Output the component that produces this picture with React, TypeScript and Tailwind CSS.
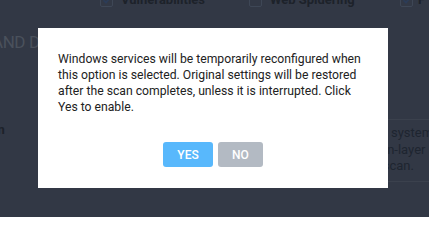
import React from "react";

function Check({ checked, className }: { checked: boolean; className?: string }) {
  return (
    <div className={"shrink-0 w-[13px] h-[13px] rounded-[2px] border border-[#3e4756] flex items-center justify-center " + (className ?? "")}>
      {checked && (
        <svg width="10" height="10" viewBox="0 0 10 10">
          <path d="M1.5 5.2 L4 7.6 L8.6 2" stroke="#2c3c57" strokeWidth="1.8" fill="none" />
        </svg>
      )}
    </div>
  );
}

export default function App() {
  return (
    <div
      className="relative w-[429px] h-[217px] overflow-hidden bg-[#323845]"
      style={{ fontFamily: "Roboto, 'Liberation Sans', sans-serif" }}
    >
      {/* background content (dimmed) */}
      <div className="flex items-center h-[12px] -mt-[6px] pl-[100px] text-[13px] font-bold text-[#1d222a] whitespace-nowrap">
        <Check checked />
        <span className="ml-[8px] w-[128px] shrink-0">Vulnerabilities</span>
        <Check checked={false} />
        <span className="ml-[8px] w-[130px] shrink-0">Web Spidering</span>
        <Check checked />
        <span className="ml-[5px]">P</span>
      </div>
      <div className="mt-[24px] -ml-[8px] text-[17px] text-[#4a515c] tracking-tight whitespace-nowrap">AND D</div>
      <div className="mt-[64px] -ml-[6px] text-[13px] font-bold text-[#1d222a]">in</div>
      <div className="absolute left-[386px] top-[119px] w-[60px] h-[63px] border-t border-b border-[#3b414d] pt-[5px] text-[13px] leading-[16.5px] text-[#1e2530] whitespace-nowrap">
        <div className="pl-[5px]">systems</div>
        <div className="-ml-[2px]">in-layer a</div>
        <div className="-ml-[9px]">, scan.</div>
      </div>

      {/* modal */}
      <div className="absolute left-[38px] top-[28px] w-[350px] h-[160px] bg-white pt-[23px] px-[20px] flex flex-col">
        <p className="text-[12.2px] leading-[16px] text-[#222]">
          Windows services will be temporarily reconfigured when this option is selected. Original settings will be restored after the scan completes, unless it is interrupted. Click Yes to enable.
        </p>
        <div className="flex justify-center gap-[5px] mt-[27px]">
          <button className="w-[50px] h-[25px] rounded-[3px] bg-[#58b8fc] text-white text-[12px] font-medium">YES</button>
          <button className="w-[45px] h-[25px] rounded-[3px] bg-[#b3bac3] text-white text-[12px] font-medium">NO</button>
        </div>
      </div>
    </div>
  );
}
